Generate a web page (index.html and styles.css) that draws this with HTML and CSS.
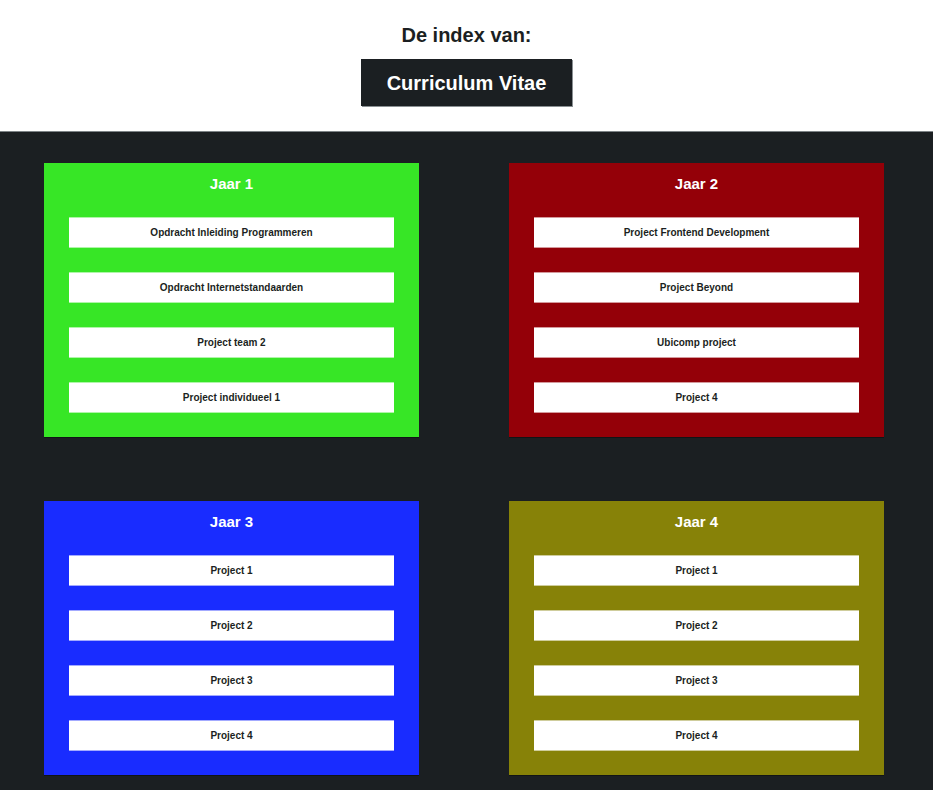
FILE: index.html
```html
<!DOCTYPE html>
<html lang="nl">
<head>
<meta charset="utf-8">
<title>Curriculum Vitae</title>
<link rel="stylesheet" href="styles.css">
</head>
<body>
<header class="top">
  <h1 class="intro">De index van:</h1>
  <div class="cv-btn">Curriculum Vitae</div>
</header>
<main class="years">
  <section class="year green">
    <h2 class="year-title">Jaar 1</h2>
    <ul class="items">
      <li class="item">Opdracht Inleiding Programmeren</li>
      <li class="item">Opdracht Internetstandaarden</li>
      <li class="item">Project team 2</li>
      <li class="item">Project individueel 1</li>
    </ul>
  </section>
  <section class="year red">
    <h2 class="year-title">Jaar 2</h2>
    <ul class="items">
      <li class="item">Project Frontend Development</li>
      <li class="item">Project Beyond</li>
      <li class="item">Ubicomp project</li>
      <li class="item">Project 4</li>
    </ul>
  </section>
  <section class="year blue">
    <h2 class="year-title">Jaar 3</h2>
    <ul class="items">
      <li class="item">Project 1</li>
      <li class="item">Project 2</li>
      <li class="item">Project 3</li>
      <li class="item">Project 4</li>
    </ul>
  </section>
  <section class="year olive">
    <h2 class="year-title">Jaar 4</h2>
    <ul class="items">
      <li class="item">Project 1</li>
      <li class="item">Project 2</li>
      <li class="item">Project 3</li>
      <li class="item">Project 4</li>
    </ul>
  </section>
</main>
</body>
</html>
```
FILE: styles.css
```css
html, body {
  margin: 0;
  padding: 0;
  background: #1b1f22;
  font-family: "Liberation Sans", Arial, sans-serif;
}
.top {
  background: #ffffff;
  height: 132px;
  box-sizing: border-box;
  border-bottom: 1px solid #7d8386;
  display: flex;
  flex-direction: column;
  align-items: center;
  padding-top: 23px;
}
.intro {
  margin: 0;
  font-size: 20px;
  line-height: 24px;
  font-weight: bold;
  color: #1b1f22;
}
.cv-btn {
  margin-top: 12px;
  background: #1b1f22;
  color: #ffffff;
  font-size: 20px;
  font-weight: bold;
  line-height: 24px;
  padding: 12px 26px 11px 26px;
  box-shadow: 1px 1px 0 #8a9093;
}
.years {
  display: grid;
  grid-template-columns: 375px 375px;
  column-gap: 90px;
  row-gap: 64px;
  padding: 31px 0 40px 44px;
}
.year {
  padding: 11px 25px 24px;
  box-shadow: 0 1px 0 rgba(0,0,0,0.35);
}
.green { background: #37e626; }
.red { background: #940008; }
.blue { background: #192cff; }
.olive { background: #878208; }
.year-title {
  margin: 0 0 23px;
  text-align: center;
  color: #ffffff;
  font-size: 15px;
  line-height: 20px;
  font-weight: bold;
}
.items {
  list-style: none;
  margin: 0;
  padding: 0;
  display: flex;
  flex-direction: column;
  gap: 24px;
}
.item {
  background: #ffffff;
  height: 29px;
  border-top: 1px solid rgba(255,255,255,0.6);
  border-bottom: 1px solid rgba(255,255,255,0.6);
  background-clip: padding-box;
  display: flex;
  align-items: center;
  justify-content: center;
  font-size: 10px;
  font-weight: bold;
  color: #1b1f22;
}
```
